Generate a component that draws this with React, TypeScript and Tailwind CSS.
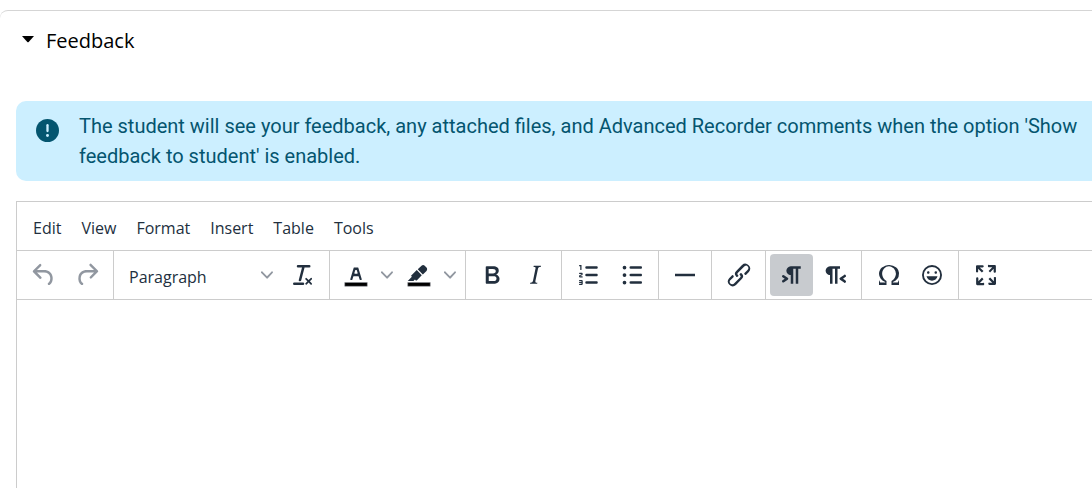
import type { ReactNode } from "react";

const menus = ["Edit", "View", "Format", "Insert", "Table", "Tools"];

const paths = {
  undo: "M6.4 8H12c3.7 0 6.2 2 6.8 5.1.6 2.7-.4 5.6-2.3 6.8a1 1 0 01-1-1.8c1.1-.6 1.8-2.7 1.4-4.6-.5-2.1-2.1-3.5-4.9-3.5H6.4l3.3 3.3a1 1 0 11-1.4 1.4l-5-5a1 1 0 010-1.4l5-5a1 1 0 011.4 1.4L6.4 8z",
  redo: "M17.6 10H12c-2.8 0-4.4 1.4-4.9 3.5-.4 2 .3 4 1.4 4.6a1 1 0 11-1 1.8c-2-1.2-2.9-4.1-2.3-6.8.6-3 3-5.1 6.8-5.1h5.6l-3.3-3.3a1 1 0 111.4-1.4l5 5a1 1 0 010 1.4l-5 5a1 1 0 01-1.4-1.4l3.3-3.3z",
  clear:
    "M13.2 6a1 1 0 010 .2l-2.6 10a1 1 0 01-1 .8h-.2a.8.8 0 01-.8-1l2.6-10H8a1 1 0 110-2h9a1 1 0 010 2h-3.8zM5 18h7a1 1 0 010 2H5a1 1 0 010-2zm13 1.5L16.5 18 15 19.5a.7.7 0 01-1-1l1.5-1.5-1.5-1.5a.7.7 0 011-1l1.5 1.5 1.5-1.5a.7.7 0 011 1L17.5 17l1.5 1.5a.7.7 0 01-1 1z",
  textColor:
    "M8.7 16h-.8a.5.5 0 01-.5-.6l2.7-9c.1-.3.3-.4.5-.4h2.8c.2 0 .4.1.5.4l2.7 9a.5.5 0 01-.5.6h-.8a.5.5 0 01-.4-.4l-.7-2.2c0-.3-.3-.4-.5-.4h-3.4c-.2 0-.4.1-.5.4l-.7 2.2c0 .3-.2.4-.4.4zm2.6-7.6l-.6 2a.5.5 0 00.5.6h1.6a.5.5 0 00.5-.6l-.6-2c0-.3-.3-.4-.5-.4h-.4c-.2 0-.4.1-.5.4z",
  highlight:
    "M7.7 16.7H3l3.3-3.3-.7-.8L10.2 8l4 4.1-4 4.2c-.2.2-.6.2-.8 0l-.6-.7-1.1 1.1zm5-7.5L11 7.4l3-2.9a2 2 0 012.6 0L18 6c.7.7.7 2 0 2.7l-2.9 2.9-1.8-1.8-.5-.6",
  bold: "M7.8 19c-.3 0-.5 0-.6-.2l-.2-.5V5.7c0-.2 0-.4.2-.5l.6-.2h5c1.5 0 2.7.3 3.5 1 .7.6 1.1 1.4 1.1 2.5a3 3 0 01-.6 1.9c-.4.6-1 1-1.6 1.2.4.1.9.3 1.3.6s.8.7 1 1.2c.4.4.5 1 .5 1.6 0 1.3-.4 2.3-1.3 3-.8.7-2.1 1-3.8 1H7.8zm5-8.3c.6 0 1.2-.1 1.6-.5.4-.3.6-.7.6-1.3 0-1.1-.8-1.7-2.3-1.7H9.3v3.5h3.4zm.5 6c.7 0 1.3-.1 1.7-.4.4-.4.6-.9.6-1.5s-.2-1-.7-1.4c-.4-.3-1-.4-2-.4H9.4v3.8h4z",
  italic:
    "M16.7 4.7l-.1.9h-.3c-.6 0-1 0-1.4.3-.3.3-.4.6-.5 1.1l-2.1 9.8v.6c0 .5.4.8 1.4.8h.2l-.2.8H8l.2-.8h.2c1.1 0 1.8-.5 2-1.5l2-9.8.1-.5c0-.6-.4-.8-1.4-.8h-.3l.2-.9h5.8z",
  ordered:
    "M10 17h8c.6 0 1 .4 1 1s-.4 1-1 1h-8a1 1 0 010-2zm0-6h8c.6 0 1 .4 1 1s-.4 1-1 1h-8a1 1 0 010-2zm0-6h8c.6 0 1 .4 1 1s-.4 1-1 1h-8a1 1 0 110-2zM6 4v3.5c0 .3-.2.5-.5.5a.5.5 0 01-.5-.5V5h-.5a.5.5 0 010-1H6zm-1 8.8l.2.2h1.3c.3 0 .5.2.5.5s-.2.5-.5.5H4.9a1 1 0 01-.9-1V13c0-.4.3-.8.6-1l1.2-.4.2-.3a.2.2 0 00-.2-.2H4.5a.5.5 0 01-.5-.5c0-.3.2-.5.5-.5h1.6c.5 0 .9.4.9 1v.1c0 .4-.3.8-.6 1l-1.2.4-.2.3zM7 17v2c0 .6-.4 1-1 1H4.5a.5.5 0 010-1h1.2c.2 0 .3-.1.3-.3 0-.2-.1-.3-.3-.3H4.4a.4.4 0 110-.8h1.3c.2 0 .3-.1.3-.3 0-.2-.1-.3-.3-.3H4.5a.5.5 0 110-1H6c.6 0 1 .4 1 1z",
  unordered:
    "M11 5h8c.6 0 1 .4 1 1s-.4 1-1 1h-8a1 1 0 010-2zm0 6h8c.6 0 1 .4 1 1s-.4 1-1 1h-8a1 1 0 010-2zm0 6h8c.6 0 1 .4 1 1s-.4 1-1 1h-8a1 1 0 010-2zM4.5 6a1.5 1.5 0 113 0 1.5 1.5 0 01-3 0zm0 6a1.5 1.5 0 113 0 1.5 1.5 0 01-3 0zm0 6a1.5 1.5 0 113 0 1.5 1.5 0 01-3 0z",
  rule: "M4 11h16v2H4z",
  link: "M6.2 12.3a1 1 0 011.4 1.4l-2.1 2a2 2 0 102.7 2.8l4.8-4.8a1 1 0 000-1.4 1 1 0 111.4-1.3 2.9 2.9 0 010 4L9.6 20a3.9 3.9 0 01-5.5-5.5l2-2zm11.6-.6a1 1 0 01-1.4-1.4l2-2a2 2 0 10-2.6-2.8L11 10.3a1 1 0 000 1.4A1 1 0 119.6 13a2.9 2.9 0 010-4L14.4 4a3.9 3.9 0 015.5 5.5l-2 2z",
  ltr: "M11 5h8v2h-2v12h-2V7h-2v12h-2v-7c-.5 0-1 0-1.4-.3A3.4 3.4 0 017.8 10a3.3 3.3 0 010-2.8 3.4 3.4 0 011.8-1.8L11 5zM4.4 16.2L6.2 15l-1.8-1.2a1 1 0 011.2-1.6l3 2a1 1 0 010 1.6l-3 2a1 1 0 11-1.2-1.6z",
  rtl: "M8 5h8v2h-2v12h-2V7h-2v12H8v-7c-.5 0-1 0-1.4-.3A3.4 3.4 0 014.8 10a3.3 3.3 0 010-2.8 3.4 3.4 0 011.8-1.8L8 5zm12 11.2a1 1 0 11-1 1.6l-3-2a1 1 0 010-1.6l3-2a1 1 0 111 1.6L18.4 15l1.8 1.2z",
  omega:
    "M15 18h4l1-2v4h-6v-3.3l1.4-1a6 6 0 001.8-2.9 6.3 6.3 0 00-.1-4.1 5.8 5.8 0 00-3-3.2c-.6-.3-1.3-.5-2.1-.5a5.1 5.1 0 00-3.9 1.8 6.3 6.3 0 00-1.3 6 6.2 6.2 0 001.8 3l1.4.9V20H4v-4l1 2h4v-.5l-2-1L5.4 15A6.5 6.5 0 014 11c0-1 .2-1.9.6-2.7A7 7 0 016.3 6C7.1 5.4 8 5 9 4.5c1-.3 2-.5 3.1-.5a8.8 8.8 0 015.7 2 7 7 0 011.7 2.3 6 6 0 01.2 4.8c-.2.7-.6 1.3-1 1.9a7.6 7.6 0 01-3.6 2.5v.5z",
  emoji:
    "M9 11c.6 0 1-.4 1-1s-.4-1-1-1a1 1 0 00-1 1c0 .6.4 1 1 1zm6 0c.6 0 1-.4 1-1s-.4-1-1-1a1 1 0 00-1 1c0 .6.4 1 1 1zm-3 5.5c2.1 0 4-1.5 4.4-3.5H7.6c.5 2 2.3 3.5 4.4 3.5zM12 4a8 8 0 100 16 8 8 0 000-16zm0 14.5a6.5 6.5 0 110-13 6.5 6.5 0 010 13z",
  fullscreen:
    "M15.3 10l-1.2-1.3 2.9-3h-2.3a.9.9 0 110-1.7H19c.5 0 .9.4.9.9v4.4a.9.9 0 11-1.8 0V7l-2.9 3zm0 4l3 3v-2.3a.9.9 0 111.7 0V19c0 .5-.4.9-.9.9h-4.4a.9.9 0 110-1.8H17l-3-2.9 1.3-1.2zM10 15.4l-2.9 3h2.3a.9.9 0 110 1.7H5a.9.9 0 01-.9-.9v-4.4a.9.9 0 111.8 0V17l2.9-3 1.2 1.3zM8.7 10L5.7 7v2.3a.9.9 0 01-1.7 0V5c0-.5.4-.9.9-.9h4.4a.9.9 0 010 1.8H7l3 2.9-1.3 1.2z",
};

type IconName = keyof typeof paths;

function Icon({ name, swatch = false }: { name: IconName; swatch?: boolean }) {
  return (
    <svg viewBox="0 0 24 24" className="size-[30px] shrink-0" fill="currentColor" fillRule="evenodd" aria-hidden="true">
      <path d={paths[name]} />
      {swatch && <path d="M3 18h18v3H3z" fill="#000" stroke="#8a8f96" strokeWidth="0.4" />}
    </svg>
  );
}

function Chevron() {
  return (
    <svg viewBox="0 0 10 10" className="size-3 shrink-0 text-[#9197a0]" fill="currentColor" aria-hidden="true">
      <path d="M8.7 2.2c.3-.3.8-.3 1 0 .4.4.4.9 0 1.2L5.7 7.8c-.3.3-.9.3-1.2 0L.2 3.4a.8.8 0 010-1.2c.3-.3.8-.3 1.1 0L5 6l3.7-3.8z" />
    </svg>
  );
}

function Group({ children, wide = false }: { children: ReactNode; wide?: boolean }) {
  return (
    <div className={`flex shrink-0 items-center border-r border-[#ccc] pr-[5px] ${wide ? "pl-[5px]" : "pl-1"}`}>
      {children}
    </div>
  );
}

function ToolButton({ name, label, active, disabled }: { name: IconName; label: string; active?: boolean; disabled?: boolean }) {
  return (
    <button
      type="button"
      aria-label={label}
      aria-pressed={active}
      disabled={disabled}
      className={`flex h-[42px] w-[43px] items-center justify-center rounded-[4px] ${active ? "bg-[#c8cbcf]" : ""} ${disabled ? "text-[#9197a0]" : ""}`}
    >
      <Icon name={name} />
    </button>
  );
}

function SplitButton({ name, label }: { name: IconName; label: string }) {
  return (
    <div className="flex h-[42px] w-[63px] items-center">
      <button type="button" aria-label={label} className="flex h-full w-[43px] items-center justify-center">
        <Icon name={name} swatch />
      </button>
      <button type="button" aria-label={`${label} options`} className="flex h-full w-5 items-center justify-center">
        <Chevron />
      </button>
    </div>
  );
}

export default function App() {
  return (
    <div className="flex min-h-screen flex-col overflow-hidden bg-white pt-[10px] font-['Open_Sans','Noto_Sans',sans-serif]">
      <section className="flex flex-1 flex-col rounded-tl-lg border-t border-[#d5d5d5] pl-4">
        <h2 className="mt-[15px] text-xl leading-[30px] text-black">
          <button type="button" aria-expanded="true" className="flex items-center gap-3 pl-[6px]">
            <svg viewBox="0 0 12 10" className="h-[10px] w-3" aria-hidden="true">
              <path d="M0 0h12L6.7 6a1 1 0 01-1.4 0z" />
            </svg>
            Feedback
          </button>
        </h2>

        <div className="mt-[45px] flex gap-5 rounded-l-[10px] bg-[#ccefff] py-[10px] pl-5 pr-2 font-[Roboto,sans-serif] text-xl leading-[30px] text-[#04556f]">
          <svg viewBox="0 0 22 22" className="mt-2 size-[23px] shrink-0" aria-hidden="true">
            <circle cx="11" cy="11" r="11" fill="currentColor" />
            <path d="M11 6v5.5" stroke="#ccefff" strokeWidth="2.2" strokeLinecap="round" />
            <circle cx="11" cy="15.8" r="1.4" fill="#ccefff" />
          </svg>
          <p>
            The student will see your feedback, any attached files, and Advanced Recorder comments when the option 'Show
            feedback to student' is enabled.
          </p>
        </div>

        <div className="mt-5 flex flex-1 flex-col border-l border-t border-[#ccc] text-[#222f3e]">
          <div role="menubar" className="flex h-[49px] items-center gap-5 border-b border-[#ccc] pl-4 pt-1 text-base leading-6">
            {menus.map((menu) => (
              <button key={menu} type="button" role="menuitem">
                {menu}
              </button>
            ))}
          </div>

          <div role="toolbar" aria-label="Formatting" className="flex h-[49px] overflow-hidden border-b border-[#ccc]">
            <Group wide>
              <ToolButton name="undo" label="Undo" disabled />
              <ToolButton name="redo" label="Redo" disabled />
            </Group>
            <Group wide>
              <button
                type="button"
                aria-haspopup="listbox"
                className="flex h-[42px] w-[162px] items-center justify-between pl-[10px] pr-2 text-base leading-6"
              >
                <span className="pt-[3px]">Paragraph</span>
                <Chevron />
              </button>
              <ToolButton name="clear" label="Clear formatting" />
            </Group>
            <Group>
              <SplitButton name="textColor" label="Text color" />
              <SplitButton name="highlight" label="Background color" />
            </Group>
            <Group>
              <ToolButton name="bold" label="Bold" />
              <ToolButton name="italic" label="Italic" />
            </Group>
            <Group wide>
              <ToolButton name="ordered" label="Numbered list" />
              <ToolButton name="unordered" label="Bullet list" />
            </Group>
            <Group>
              <ToolButton name="rule" label="Horizontal line" />
            </Group>
            <Group wide>
              <ToolButton name="link" label="Insert link" />
            </Group>
            <Group>
              <ToolButton name="ltr" label="Left to right" active />
              <ToolButton name="rtl" label="Right to left" />
            </Group>
            <Group wide>
              <ToolButton name="omega" label="Special character" />
              <ToolButton name="emoji" label="Emoticons" />
            </Group>
            <div className="flex shrink-0 items-center pl-[5px]">
              <ToolButton name="fullscreen" label="Fullscreen" />
            </div>
          </div>

          <textarea aria-label="Feedback" className="w-full flex-1 resize-none p-4 text-base leading-6 outline-none" />
        </div>
      </section>
    </div>
  );
}
